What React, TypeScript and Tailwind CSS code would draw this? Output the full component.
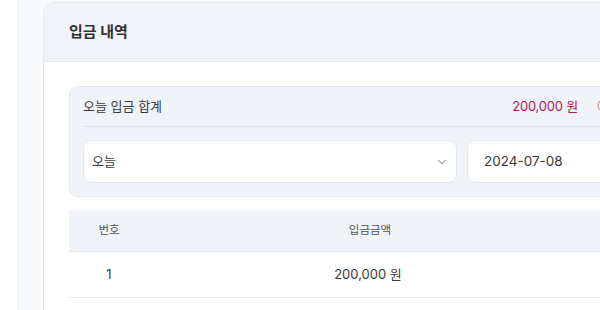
import React from "react";

export default function App() {
  return (
    <div
      className="w-[600px] h-[310px] overflow-hidden flex bg-white"
      style={{ fontFamily: "Inter, 'Noto Sans CJK KR', 'Noto Sans', sans-serif" }}
    >
      <div className="w-[19px] shrink-0 bg-white border-r border-[#e9edf2]" />
      <div className="flex-1 bg-[#f9fafc] pl-6 pt-[2px] min-w-0 overflow-hidden">
        <div className="w-[900px] h-[400px] bg-white border border-[#e3e8ef] rounded-xl overflow-hidden">
          <div className="h-[59px] bg-[#f1f4f8] border-b border-[#e3e8ef] flex items-center px-[25px]">
            <span className="text-[15px] font-bold text-[#333]">입금 내역</span>
          </div>
          <div className="pt-6 pb-6 pl-[25px] pr-6">
            <div className="bg-[#f0f4f9] border border-[#e3e8ef] rounded-lg px-[13px] pb-[13px]">
              <div className="h-[40px] flex items-center border-b border-[#e0e6ee]">
                <div className="w-[495px] shrink-0 flex items-center justify-between">
                  <span className="text-[13px] text-[#3a3a3a]">오늘 입금 합계</span>
                  <span className="text-[13px] text-[#b8124f] tracking-[-0.2px]">200,000 원</span>
                </div>
                <span className="ml-[19px] text-[13px] text-[#e08a4a]">예</span>
              </div>
              <div className="flex gap-[10px] mt-[13px]">
                <div className="w-[374px] shrink-0 h-[43px] bg-white border border-[#e3e8ef] rounded-lg flex items-center justify-between pl-[8px] pr-[7px]">
                  <span className="text-[13px] text-[#3a3a3a]">오늘</span>
                  <svg width="14" height="14" viewBox="0 0 24 24" fill="none" stroke="#8a8a8a" strokeWidth="1.8" strokeLinecap="round" strokeLinejoin="round">
                    <path d="M6 9l6 6 6-6" />
                  </svg>
                </div>
                <div className="w-[374px] shrink-0 h-[43px] bg-white border border-[#e3e8ef] rounded-lg flex items-center pl-[16px]">
                  <span className="text-[13.5px] text-[#3a3a3a]">2024-07-08</span>
                </div>
              </div>
            </div>
            <div className="mt-[13px]">
              <div className="h-[42px] bg-[#f0f3f8] border-b border-[#e0e6ee] flex items-center text-[11.5px] text-[#555]">
                <div className="w-[80px] text-center">번호</div>
                <div className="w-[442px] text-center">입금금액</div>
              </div>
              <div className="h-[46px] border-b border-[#e6e9ee] flex items-center text-[13px] text-[#3a3a3a]">
                <div className="w-[80px] text-center">1</div>
                <div className="w-[438px] text-center">200,000 원</div>
              </div>
            </div>
          </div>
        </div>
      </div>
    </div>
  );
}
